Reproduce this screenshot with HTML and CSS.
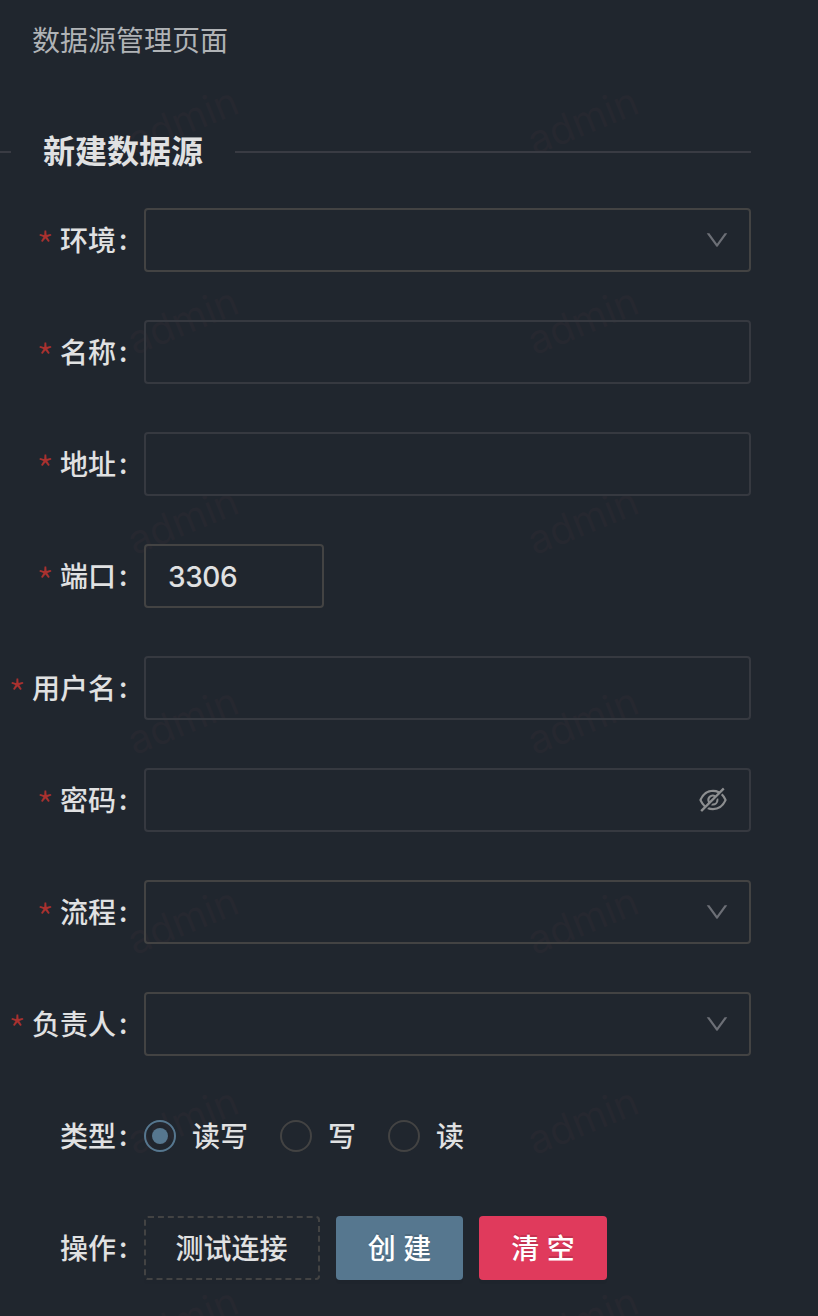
FILE: index.html
```html
<!DOCTYPE html>
<html lang="zh-CN">
<head>
<meta charset="utf-8">
<title>数据源管理页面</title>
<link rel="stylesheet" href="styles.css">
</head>
<body>
<svg class="sprite" aria-hidden="true">
  <symbol id="down" viewBox="64 64 896 896"><path d="M884 256h-75c-5.1 0-9.9 2.5-12.9 6.6L512 654.2 227.9 262.6c-3-4.1-7.8-6.6-12.9-6.6h-75c-6.5 0-10.3 7.4-6.5 12.7l352.6 486.1c12.8 17.6 39 17.6 51.7 0l352.6-486.1c3.9-5.3.1-12.7-6.4-12.7z"/></symbol>
  <symbol id="eye-invisible" viewBox="64 64 896 896"><path d="M942.2 486.2Q889.47 375.11 816.7 305l-50.88 50.88C807.31 395.53 843.45 447.4 874.7 512 791.5 684.2 673.4 766 512 766q-72.67 0-133.87-22.38L323 798.75Q408 838 512 838q288.3 0 430.2-300.3a60.29 60.29 0 000-51.5zm-63.57-320.64L836 122.88a8 8 0 00-11.32 0L715.31 232.2Q624.86 186 512 186q-288.3 0-430.2 300.3a60.3 60.3 0 000 51.5q56.69 119.4 136.5 191.41L112.48 835a8 8 0 000 11.31L155.17 889a8 8 0 0011.31 0l712.15-712.12a8 8 0 000-11.32zM149.3 512C232.6 339.8 350.7 258 512 258c54.54 0 104.13 9.36 149.12 28.39l-70.3 70.3a176 176 0 00-238.13 238.13l-83.42 83.42C223.1 637.49 183.3 582.28 149.3 512zm246.7 0a112.11 112.11 0 01146.2-106.69L401.31 546.2A112 112 0 01396 512z"/><path d="M508 624c-3.46 0-6.87-.16-10.25-.47l-52.82 52.82a176.09 176.09 0 00227.42-227.42l-52.82 52.82c.31 3.38.47 6.79.47 10.25a111.94 111.94 0 01-112 112z"/></symbol>
</svg>
<main class="page">
  <header class="page-title">数据源管理页面</header>
  <h2 class="divider"><span class="divider-text">新建数据源</span></h2>
  <form class="form">
    <div class="row"><div class="label"><span class="star">*</span>环境<span class="colon">:</span></div><div class="field select"><svg class="arrow"><use href="#down"/></svg></div></div>
    <div class="row"><div class="label"><span class="star">*</span>名称<span class="colon">:</span></div><div class="field"></div></div>
    <div class="row"><div class="label"><span class="star">*</span>地址<span class="colon">:</span></div><div class="field"></div></div>
    <div class="row"><div class="label"><span class="star">*</span>端口<span class="colon">:</span></div><div class="field number">3306</div></div>
    <div class="row"><div class="label"><span class="star">*</span>用户名<span class="colon">:</span></div><div class="field"></div></div>
    <div class="row"><div class="label"><span class="star">*</span>密码<span class="colon">:</span></div><div class="field"><svg class="eye"><use href="#eye-invisible"/></svg></div></div>
    <div class="row"><div class="label"><span class="star">*</span>流程<span class="colon">:</span></div><div class="field select"><svg class="arrow"><use href="#down"/></svg></div></div>
    <div class="row"><div class="label"><span class="star">*</span>负责人<span class="colon">:</span></div><div class="field select"><svg class="arrow"><use href="#down"/></svg></div></div>
    <div class="row"><div class="label">类型<span class="colon">:</span></div>
      <div class="radios">
        <label class="radio"><span class="dot checked"></span><span class="radio-text">读写</span></label>
        <label class="radio"><span class="dot"></span><span class="radio-text">写</span></label>
        <label class="radio"><span class="dot"></span><span class="radio-text">读</span></label>
      </div>
    </div>
    <div class="row"><div class="label">操作<span class="colon">:</span></div>
      <div class="actions">
        <button type="button" class="btn dashed">测试连接</button>
        <button type="button" class="btn primary">创 建</button>
        <button type="button" class="btn danger">清 空</button>
      </div>
    </div>
  </form>
  <div class="watermark" aria-hidden="true">
    <span>admin</span><span>admin</span>
    <span>admin</span><span>admin</span>
    <span>admin</span><span>admin</span>
    <span>admin</span><span>admin</span>
    <span>admin</span><span>admin</span>
    <span>admin</span><span>admin</span>
    <span>admin</span><span>admin</span>
  </div>
</main>
</body>
</html>
```
FILE: styles.css
```css
* { box-sizing: border-box; }
body {
  margin: 0;
  background: #20262e;
  color: #e0e1e2;
  font: 28px/40px "Noto Sans CJK SC", sans-serif;
}
.sprite { display: none; }
.page {
  position: relative;
  isolation: isolate;
  height: 1316px;
  overflow: hidden;
}
.page-title {
  padding: 19px 32px 0;
  height: 128px;
  color: #b0b3b6;
}
.divider {
  display: flex;
  align-items: center;
  width: 751px;
  height: 48px;
  margin: 0 0 32px;
  font-size: 32px;
  font-weight: 700;
  line-height: 42px;
}
.divider::before, .divider::after {
  content: "";
  height: 2px;
  background: #393b43;
}
.divider::before { width: 11px; }
.divider::after { flex: 1; }
.divider-text { padding: 0 32px 6px; }
.form {
  display: flex;
  flex-direction: column;
  gap: 48px;
  width: 751px;
}
.row {
  display: flex;
  align-items: center;
  height: 64px;
}
.label {
  display: flex;
  justify-content: flex-end;
  align-items: center;
  width: 144px;
  padding: 0 16px 2px 0;
  font-weight: 500;
}
.star {
  margin-right: 6px;
  padding-top: 11px;
  color: #a9312f;
  font-size: 40px;
  font-weight: 300;
}
.colon {
  width: 8px;
  margin: 0 1px 2px 3px;
  text-align: center;
}
.field {
  display: flex;
  align-items: center;
  justify-content: flex-end;
  width: 607px;
  height: 64px;
  padding: 0 22px;
  border: 2px solid #363940;
  border-radius: 4px;
}
.select, .number { border-color: #434343; }
.select { padding-right: 20px; }
.number {
  width: 180px;
  justify-content: flex-start;
  padding-top: 2px;
  font-family: Inter, sans-serif;
  font-weight: 500;
  letter-spacing: -.4px;
}
.arrow {
  width: 24px;
  height: 24px;
  fill: #6c6f76;
}
.eye {
  width: 28px;
  height: 28px;
  fill: #8c8e90;
}
.radios { display: flex; gap: 32px; }
.radio {
  display: flex;
  align-items: center;
  gap: 16px;
  font-weight: 500;
}
.radio-text { padding-bottom: 2px; }
.dot {
  display: flex;
  align-items: center;
  justify-content: center;
  width: 32px;
  height: 32px;
  border: 2px solid #434343;
  border-radius: 50%;
}
.checked { border-color: #56778f; }
.checked::after {
  content: "";
  width: 16px;
  height: 16px;
  border-radius: 50%;
  background: #56778f;
}
.actions { display: flex; gap: 16px; }
.btn {
  height: 64px;
  padding: 0 0 2px;
  border: 0;
  border-radius: 4px;
  color: #fff;
  font: 500 28px/40px "Noto Sans CJK SC", sans-serif;
  word-spacing: 1px;
  text-shadow: 0 -2px 0 rgba(0, 0, 0, .12);
  box-shadow: 0 4px 0 rgba(0, 0, 0, .045);
}
.dashed {
  width: 176px;
  padding-right: 1px;
  border: 2px dashed #434343;
  background: transparent;
  color: #e0e1e2;
  text-shadow: none;
  box-shadow: 0 4px 0 rgba(0, 0, 0, .015);
}
.primary { width: 127px; background: #56778f; }
.danger { width: 128px; background: #e03a5c; }
.watermark {
  position: absolute;
  z-index: -1;
  left: -17px;
  top: 21px;
  display: grid;
  grid-template-columns: 400px 400px;
  grid-auto-rows: 200px;
  place-items: center;
  color: rgba(58, 46, 54, .26);
  font-family: Inter, sans-serif;
  font-size: 40px;
  pointer-events: none;
}
.watermark span { transform: rotate(-22deg); }
```
